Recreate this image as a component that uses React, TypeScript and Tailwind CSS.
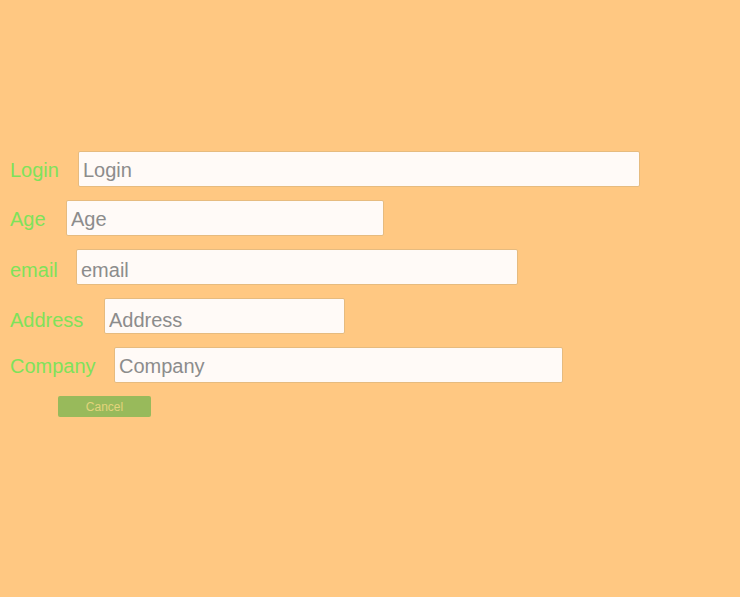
import React from "react";

const rows = [
  { label: "Login", lw: "w-[68px]", iw: "w-[562px]", pt: "pt-[2px]" },
  { label: "Age", lw: "w-[56px]", iw: "w-[318px]", pt: "pt-[2px]" },
  { label: "email", lw: "w-[66px]", iw: "w-[442px]", pt: "pt-[6px]" },
  { label: "Address", lw: "w-[94px]", iw: "w-[241px]", pt: "pt-[8px]" },
  { label: "Company", lw: "w-[104px]", iw: "w-[449px]", pt: "pt-[2px]" },
];

export default function App() {
  return (
    <div
      className="w-[740px] h-[597px] bg-[#ffc882] pt-[151px] pl-[10px]"
      style={{ fontFamily: '"Liberation Sans", Arial, sans-serif' }}
    >
      <div className="flex flex-col gap-[13px]">
        {rows.map((r) => (
          <div key={r.label} className="flex items-center h-[36px]">
            <label className={`${r.lw} ${r.pt} text-[20px] leading-[30px] text-[#7ee25a] shrink-0`}>
              {r.label}
            </label>
            <input
              placeholder={r.label}
              className={`${r.iw} ${r.pt} h-[36px] bg-[#fffaf7] border border-[#e6bb7f] rounded-[2px] px-[4px] pb-0 text-[20px] text-[#555] placeholder:text-[#8c8c8c] outline-none`}
            />
          </div>
        ))}
      </div>
      <div className="mt-[13px] ml-[48px]">
        <button className="w-[93px] h-[21px] bg-[#98ba5b] rounded-[2px] text-[12px] text-[#e2d47c] flex items-center justify-center">
          Cancel
        </button>
      </div>
    </div>
  );
}
